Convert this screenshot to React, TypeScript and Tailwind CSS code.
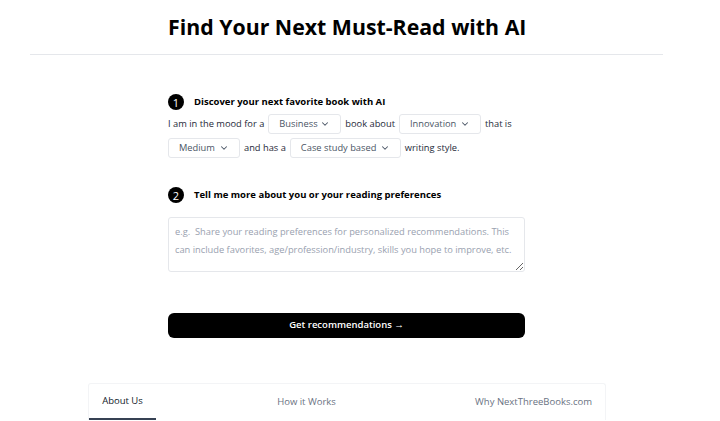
import { ChevronDown } from 'lucide-react'

function Pick({ label, w }: { label: string; w: string }) {
  return (
    <span className={`inline-flex items-center justify-between whitespace-nowrap h-[20px] ${w} px-[10px] border border-gray-200 rounded-[3px] text-gray-600 bg-white mx-[4px]`}>
      <span>{label}</span>
      <ChevronDown size={10} strokeWidth={2.5} className="text-gray-600" />
    </span>
  )
}

function Step({ n, children }: { n: number; children: React.ReactNode }) {
  return (
    <div className="flex items-center gap-[10px]">
      <span className="w-[16px] h-[16px] rounded-full bg-black text-white text-[11px] leading-none flex items-center justify-center">{n}</span>
      <span className="font-bold text-[9.5px] text-black">{children}</span>
    </div>
  )
}

export default function App() {
  return (
    <div className="w-[720px] h-[421px] bg-white overflow-hidden text-black" style={{ fontFamily: '"Open Sans", "Noto Sans", sans-serif' }}>
      <div className="ml-[168px] pt-[12px] h-[54px]">
        <h1 className="text-[21.3px] font-bold leading-[30px]">Find Your Next Must-Read with AI</h1>
      </div>
      <div className="ml-[30px] w-[633px] h-[1px] bg-gray-200" />

      <div className="ml-[168px] w-[357px] pt-[39px]">
        <Step n={1}>Discover your next favorite book with AI</Step>
        <div className="text-[9.3px] text-gray-800 mt-[2px] leading-[24px]">
          <div className="flex items-center whitespace-nowrap">
            I am in the mood for a<Pick label="Business" w="w-[73px]" />book about<Pick label="Innovation" w="w-[82px]" />that is
          </div>
          <div className="flex items-center whitespace-nowrap">
            <Pick label="Medium" w="w-[72px] !ml-0" />and has a<Pick label="Case study based" w="w-[111px]" />writing style.
          </div>
        </div>

        <div className="mt-[27px]">
          <Step n={2}>Tell me more about you or your reading preferences</Step>
        </div>
        <textarea
          className="block mt-[14px] w-[357px] h-[55px] border border-gray-200 rounded-[3px] px-[6px] py-[5px] text-[9.3px] leading-[18px] text-gray-700 placeholder:text-gray-400 outline-none"
          placeholder="e.g.  Share your reading preferences for personalized recommendations. This can include favorites, age/profession/industry, skills you hope to improve, etc."
        />

        <button className="block mt-[41px] w-[357px] h-[25px] bg-black text-white rounded-[6px] text-[9.5px] font-semibold">
          Get recommendations →
        </button>
      </div>

      <div className="mt-[45px] ml-[88px] w-[518px] h-[37px] border border-gray-100 border-b-0 rounded-t-[3px] flex items-stretch text-[9.5px]">
        <div className="w-[67px] flex items-center justify-center border-b-2 border-gray-700 text-gray-900 font-medium">About Us</div>
        <div className="flex-1 flex items-center justify-center text-gray-500 font-medium pr-[18px]">How it Works</div>
        <div className="flex items-center justify-end pr-[13px] text-gray-500 font-medium">Why NextThreeBooks.com</div>
      </div>
    </div>
  )
}
